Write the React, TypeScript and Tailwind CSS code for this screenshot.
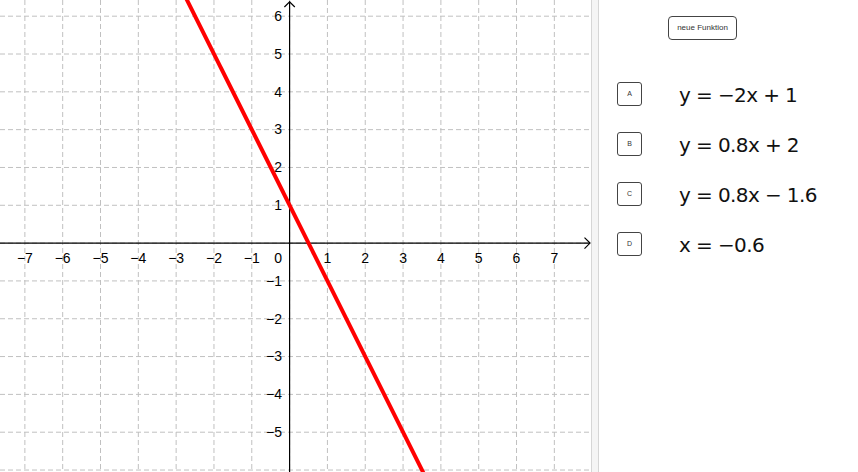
import React from "react";

const ox = 289.6;
const oy = 243.1;
const u = 37.82;
const W = 591;
const H = 472;

const px = (x: number) => ox + x * u;
const py = (y: number) => oy - y * u;

const xTicks = [-7, -6, -5, -4, -3, -2, -1, 1, 2, 3, 4, 5, 6, 7];
const yTicks = [6, 5, 4, 3, 2, 1, -1, -2, -3, -4, -5];

const label = (n: number) => (n < 0 ? "\u2212" + Math.abs(n) : String(n));

function Graph() {
  const vLines: number[] = [];
  for (let k = -7; k <= 8; k++) vLines.push(px(k));
  const hLines: number[] = [];
  for (let k = -6; k <= 6; k++) hLines.push(py(k));

  // y = -2x + 1, clipped by the view
  const yTop = (oy - 0) / u;
  const yBot = (oy - H) / u;
  const x1 = (1 - yTop - 0.3) / 2;
  const x2 = (1 - yBot + 0.3) / 2;

  return (
    <svg width={W} height={H} className="block" style={{ fontFamily: '"Liberation Sans", Arial, sans-serif' }}>
      {vLines.map((x) => (
        <line key={"v" + x} x1={x} y1={0} x2={x} y2={H} stroke="#c0c0c0" strokeWidth={1} strokeDasharray="5 3" />
      ))}
      {hLines.map((y) => (
        <line key={"h" + y} x1={0} y1={y} x2={W} y2={y} stroke="#c0c0c0" strokeWidth={1} strokeDasharray="5 3" />
      ))}

      {/* axes */}
      <line x1={0} y1={oy} x2={590} y2={oy} stroke="#000" strokeWidth={1.2} />
      <polyline points={`584.5,237.6 590,243.1 584.5,248.6`} fill="none" stroke="#000" strokeWidth={1.2} />
      <line x1={ox} y1={1.5} x2={ox} y2={H} stroke="#000" strokeWidth={1.2} />
      <polyline points={`${ox - 5.2},7 ${ox},1.8 ${ox + 5.2},7`} fill="none" stroke="#000" strokeWidth={1.2} />

      {/* labels */}
      {xTicks.map((n) => (
        <text key={"xl" + n} x={px(n)} y={262.7} fontSize={14} textAnchor="middle" fill="#000">
          {label(n)}
        </text>
      ))}
      <text x={282} y={262.7} fontSize={14} textAnchor="end" fill="#000">
        0
      </text>
      {yTicks.map((n) => (
        <text key={"yl" + n} x={282} y={py(n) + 4.8} fontSize={14} textAnchor="end" fill="#000">
          {label(n)}
        </text>
      ))}

      <line x1={px(x1)} y1={py(-2 * x1 + 1)} x2={px(x2)} y2={py(-2 * x2 + 1)} stroke="#ff0000" strokeWidth={4} />
    </svg>
  );
}

const rows = [
  { key: "A", eq: "y = \u22122x + 1" },
  { key: "B", eq: "y = 0.8x + 2" },
  { key: "C", eq: "y = 0.8x \u2212 1.6" },
  { key: "D", eq: "x = \u22120.6" },
];

export default function App() {
  return (
    <div className="flex w-[858px] h-[472px] overflow-hidden bg-white">
      <div className="w-[591px] h-[472px] shrink-0">
        <Graph />
      </div>
      <div className="w-[8px] h-full shrink-0 bg-[#f5f5f5] border-x border-[#d6d6d6]" />
      <div className="flex-1 flex flex-col pt-[16px]">
        <button className="ml-[69px] w-[69px] h-[24px] rounded-[4px] border-[1.5px] border-[#444] bg-white text-[8px] text-[#333] font-['Liberation_Sans',Arial,sans-serif]">
          neue Funktion
        </button>
        <div className="mt-[42px] flex flex-col gap-[26px]">
          {rows.map((r) => (
            <div key={r.key} className="flex items-center h-[24px]">
              <div className="ml-[18px] w-[25px] h-[24px] rounded-[3px] border-[1.5px] border-[#444] flex items-center justify-center text-[7px] text-[#333] font-['Liberation_Sans',Arial,sans-serif]">
                {r.key}
              </div>
              <div className="ml-[37px] text-[20px] leading-none tracking-[-0.6px] text-[#111] whitespace-pre font-['DejaVu_Sans',sans-serif] pt-[2px]">
                {r.eq}
              </div>
            </div>
          ))}
        </div>
      </div>
    </div>
  );
}
